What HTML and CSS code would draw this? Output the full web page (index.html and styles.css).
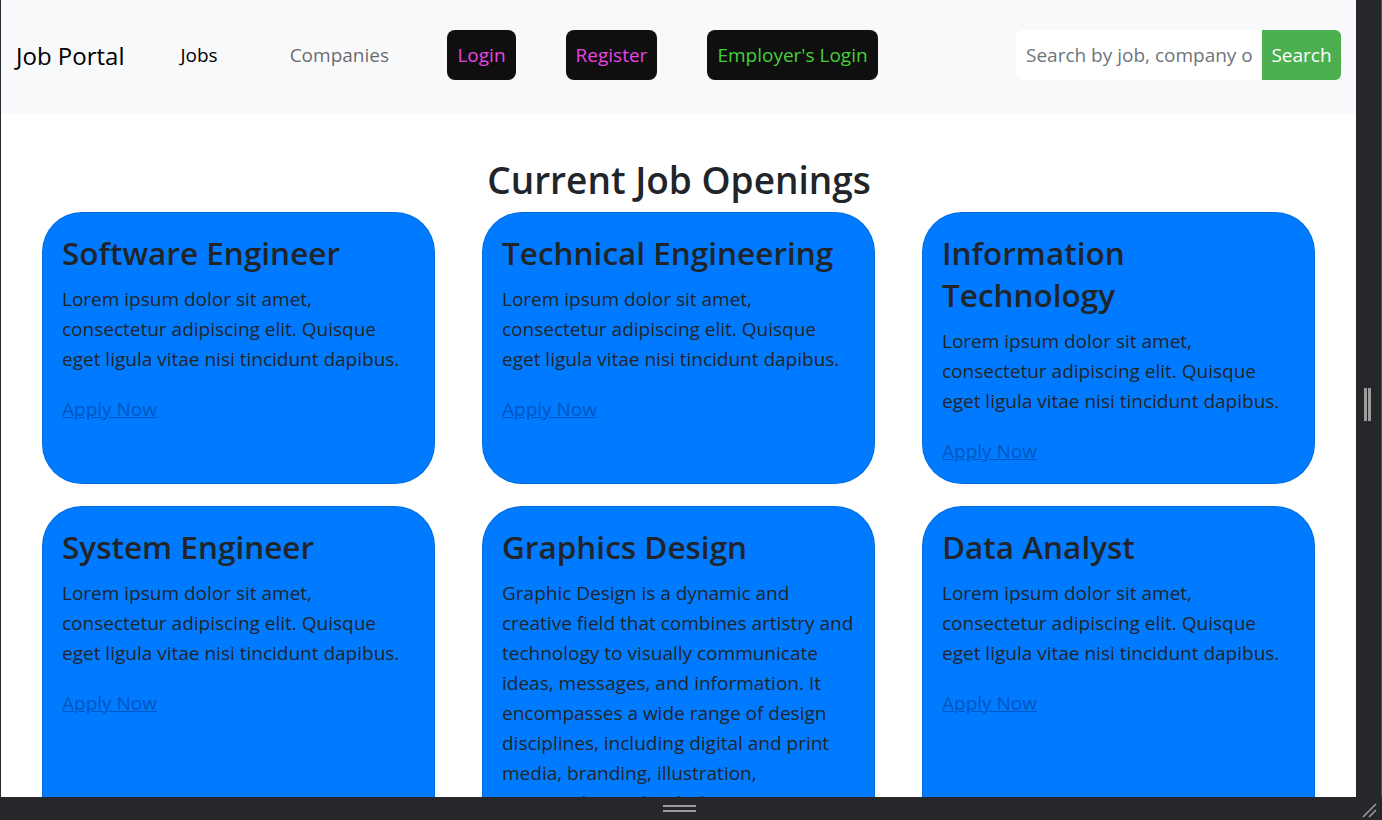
FILE: index.html
```html
<!DOCTYPE html>
<html lang="en">
<head>
<meta charset="utf-8">
<title>Job Portal</title>
<link rel="stylesheet" href="styles.css">
</head>
<body>
<div class="window">
  <div class="viewport">
    <nav class="navbar">
      <a class="brand" href="#">Job Portal</a>
      <a class="nav-link active link-jobs" href="#">Jobs</a>
      <a class="nav-link link-companies" href="#">Companies</a>
      <a class="nav-btn pink btn-login" href="#">Login</a>
      <a class="nav-btn pink btn-register" href="#">Register</a>
      <a class="nav-btn green btn-employer" href="#">Employer's Login</a>
      <form class="search">
        <input class="search-input" type="text" placeholder="Search by job, company or location">
        <button class="search-btn" type="button">Search</button>
      </form>
    </nav>
    <main class="main">
      <h2 class="page-title">Current Job Openings</h2>
      <div class="grid">
        <div class="card">
          <h3 class="card-title">Software Engineer</h3>
          <p class="card-text">Lorem ipsum dolor sit amet, consectetur adipiscing elit. Quisque eget ligula vitae nisi tincidunt dapibus.</p>
          <a class="apply" href="#">Apply Now</a>
        </div>
        <div class="card">
          <h3 class="card-title">Technical Engineering</h3>
          <p class="card-text">Lorem ipsum dolor sit amet, consectetur adipiscing elit. Quisque eget ligula vitae nisi tincidunt dapibus.</p>
          <a class="apply" href="#">Apply Now</a>
        </div>
        <div class="card">
          <h3 class="card-title">Information Technology</h3>
          <p class="card-text">Lorem ipsum dolor sit amet, consectetur adipiscing elit. Quisque eget ligula vitae nisi tincidunt dapibus.</p>
          <a class="apply" href="#">Apply Now</a>
        </div>
        <div class="card">
          <h3 class="card-title">System Engineer</h3>
          <p class="card-text">Lorem ipsum dolor sit amet, consectetur adipiscing elit. Quisque eget ligula vitae nisi tincidunt dapibus.</p>
          <a class="apply" href="#">Apply Now</a>
        </div>
        <div class="card">
          <h3 class="card-title">Graphics Design</h3>
          <p class="card-text">Graphic Design is a dynamic and creative field that combines artistry and technology to visually communicate ideas, messages, and information. It encompasses a wide range of design disciplines, including digital and print media, branding, illustration, typography, and web design.</p>
          <a class="apply" href="#">Apply Now</a>
        </div>
        <div class="card">
          <h3 class="card-title">Data Analyst</h3>
          <p class="card-text">Lorem ipsum dolor sit amet, consectetur adipiscing elit. Quisque eget ligula vitae nisi tincidunt dapibus.</p>
          <a class="apply" href="#">Apply Now</a>
        </div>
      </div>
    </main>
  </div>
  <div class="side-rail">
    <span class="grip-v"></span>
  </div>
  <div class="bottom-bar">
    <span class="grip-h"></span>
  </div>
  <div class="corner">
    <svg width="20" height="20" viewBox="0 0 20 20" class="corner-icon">
      <path d="M4 18 L17 5 M10 18 L17 11" stroke="#9a9a9a" stroke-width="1.6" fill="none"/>
    </svg>
  </div>
</div>
</body>
</html>
```

FILE: styles.css
```css
* { box-sizing: border-box; }

html, body {
  margin: 0;
  padding: 0;
  background: #26272b;
  width: 1382px;
  height: 820px;
  overflow: hidden;
}

body {
  font-family: "Open Sans", "Noto Sans", sans-serif;
  color: #212529;
}

.window {
  display: grid;
  grid-template-columns: 1356px 26px;
  grid-template-rows: 797px 23px;
  width: 1382px;
  height: 820px;
}

.viewport {
  grid-column: 1;
  grid-row: 1;
  background: #ffffff;
  border-left: 1px solid #2a2b2f;
  overflow: hidden;
}

/* ---------- navbar ---------- */
.navbar {
  display: flex;
  align-items: center;
  height: 114px;
  padding: 0 0 4px 15px;
  background: #f8f9fa;
}

.brand {
  font-size: 24px;
  color: #000;
  text-decoration: none;
}

.nav-link {
  font-size: 19px;
  text-decoration: none;
}

.link-jobs {
  color: #000;
  margin-left: 56px;
}

.link-companies {
  color: rgba(0, 0, 0, 0.6);
  margin-left: 72px;
}

.nav-btn {
  display: flex;
  align-items: center;
  justify-content: center;
  height: 50px;
  border-radius: 8px;
  background: #0f0f0f;
  font-size: 19px;
  text-decoration: none;
}

.pink { color: #e745e2; }
.green { color: #46cf3a; }

.btn-login { width: 69px; margin-left: 58px; }
.btn-register { width: 91px; margin-left: 50px; }
.btn-employer { width: 171px; margin-left: 50px; }

.search {
  display: flex;
  margin: 0 15px 0 auto;
  height: 50px;
}

.search-input {
  width: 246px;
  height: 50px;
  border: none;
  border-radius: 8px 0 0 8px;
  background: #fff;
  padding: 0 10px;
  font-family: inherit;
  font-size: 19px;
  color: #495057;
  outline: none;
}

.search-input::placeholder { color: #6c757d; }

.search-btn {
  width: 79px;
  height: 50px;
  border: none;
  border-radius: 0 6px 6px 0;
  background: #4caf50;
  color: #fff;
  font-family: inherit;
  font-size: 19px;
  padding: 0;
}

/* ---------- content ---------- */
.main {
  padding: 42px 40px 0 41px;
}

.page-title {
  margin: 0 0 8px;
  text-align: center;
  font-size: 37px;
  font-weight: 600;
  line-height: 48px;
  color: #212529;
}

.grid {
  display: grid;
  grid-template-columns: repeat(3, 393px);
  column-gap: 47px;
  row-gap: 22px;
}

.card {
  background: #007bff;
  border: 1px solid rgba(0, 0, 0, 0.12);
  border-radius: 40px;
  padding: 19px 19px 17px;
}

.card-title {
  margin: 0 0 10px;
  font-size: 31.5px;
  font-weight: 600;
  line-height: 42px;
  color: #212529;
}

.card-text {
  margin: 0 0 20px;
  font-size: 19px;
  line-height: 30px;
  color: #212529;
}

.apply {
  display: inline-block;
  font-size: 19px;
  line-height: 30px;
  color: #0056c0;
  text-decoration: underline;
}

/* ---------- frame chrome ---------- */
.side-rail {
  grid-column: 2;
  grid-row: 1;
  display: flex;
  align-items: center;
  justify-content: center;
  border-right: 1px solid #3d5a50;
}

.grip-v {
  width: 7px;
  height: 33px;
  margin-left: -2px;
  margin-top: 12px;
  border-left: 3px solid #9c9c9c;
  border-right: 3px solid #9c9c9c;
}

.bottom-bar {
  grid-column: 1;
  grid-row: 2;
  display: flex;
  justify-content: center;
  align-items: center;
}

.grip-h {
  width: 33px;
  height: 7px;
  margin-left: 2px;
  border-top: 2px solid #9c9c9c;
  border-bottom: 2px solid #9c9c9c;
}

.corner {
  grid-column: 2;
  grid-row: 2;
  display: flex;
  align-items: flex-end;
  justify-content: flex-end;
}

.corner-icon { display: block; margin: 0 3px 1px 0; }
```
